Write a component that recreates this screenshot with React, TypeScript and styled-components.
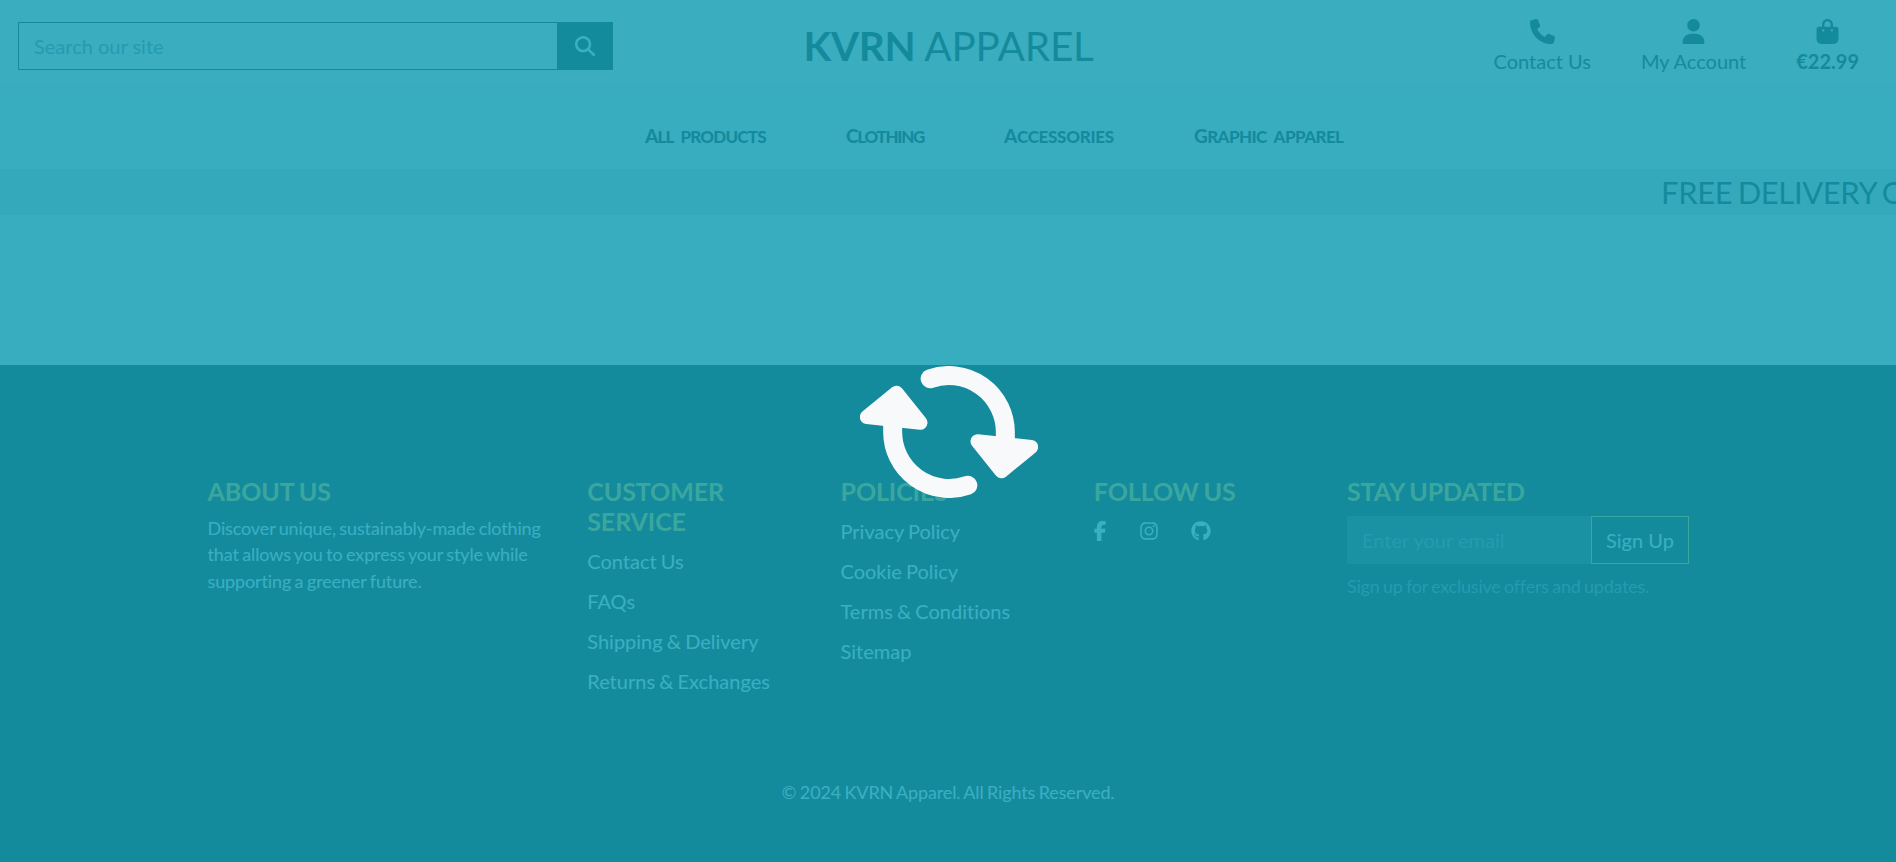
import React from "react";
import styled, { createGlobalStyle } from "styled-components";
import {
  FaBagShopping,
  FaFacebookF,
  FaGithub,
  FaInstagram,
  FaMagnifyingGlass,
  FaPhone,
  FaUser,
} from "react-icons/fa6";

const GlobalStyle = createGlobalStyle`
  *, *::before, *::after { box-sizing: border-box; }
  body {
    margin: 0;
    background: #f5ebe6;
    color: #000;
    font-family: Lato, "Liberation Sans", sans-serif;
    font-size: 20px;
    font-variant-ligatures: none;
    line-height: 1.5;
    overflow: hidden;
  }
  a { color: inherit; text-decoration: none; }
  h5, p, ul { margin: 0; padding: 0; }
`;

const Page = styled.div`
  display: flex;
  flex-direction: column;
  height: 862px;
`;

const Header = styled.header`
  display: grid;
  grid-template-columns: 632px 632px 632px;
  align-items: center;
  height: 92px;
  flex: none;
  background: linear-gradient(#fde6de 84px, transparent 84px);
`;

const SearchForm = styled.form`
  display: flex;
  height: 48px;
  margin: 0 19px 0 18px;
`;

const SearchInput = styled.input`
  flex: 1;
  min-width: 0;
  padding: 0 15px;
  border: 1px solid #000;
  border-right: 0;
  border-radius: 0;
  background: transparent;
  font: inherit;
  &::placeholder { color: #6c757d; opacity: 1; }
`;

const SearchButton = styled.button`
  display: flex;
  align-items: center;
  justify-content: center;
  width: 56px;
  padding: 0;
  border: 0;
  background: #000;
  color: #f8f9fa;
  font-size: 20px;
`;

const Logo = styled.a`
  justify-self: center;
  padding-left: 1px;
  font-size: 40.5px;
  letter-spacing: -0.25px;
  line-height: 50px;
  white-space: nowrap;
`;

const Actions = styled.div`
  display: flex;
  justify-content: flex-end;
  gap: 50px;
  padding: 2px 37px 0 0;
`;

const Action = styled.a<{ $bold?: boolean }>`
  display: flex;
  flex-direction: column;
  align-items: center;
  font-weight: ${(p) => (p.$bold ? 700 : 400)};
  line-height: 30px;
  svg { font-size: 25px; margin-bottom: 2px; }
`;

const Nav = styled.nav`
  display: flex;
  align-items: center;
  gap: 80px;
  height: 77px;
  padding: 11px 0 0 645px;
  flex: none;
`;

const NavLink = styled.a<{ $width: number; $tracking: number }>`
  width: ${(p) => p.$width}px;
  font-weight: 900;
  font-size: 17px;
  line-height: 24px;
  letter-spacing: ${(p) => p.$tracking}px;
  word-spacing: 4px;
  text-transform: uppercase;
  white-space: nowrap;
  &::first-letter { font-size: 19px; }
`;

const Banner = styled.div`
  height: 46px;
  padding-left: 1661px;
  overflow: hidden;
  background: #d9d0cc;
  font-size: 31px;
  letter-spacing: -0.4px;
  word-spacing: -2px;
  line-height: 47px;
  white-space: nowrap;
  flex: none;
`;

const Content = styled.main`
  height: 150px;
  flex: none;
`;

const Footer = styled.footer`
  display: flex;
  flex-direction: column;
  flex: 1;
  padding-top: 111px;
  background: #000;
  color: #f8f9fa;
`;

const FooterGrid = styled.div`
  display: grid;
  grid-template-columns: 342px 215.5px 215.5px 215.5px 342px;
  column-gap: 37.75px;
  height: 300px;
  padding-left: 207.5px;
`;

const Heading = styled.h5`
  margin-bottom: 9px;
  color: #ffc107;
  font-size: 25px;
  font-weight: 700;
  letter-spacing: -0.1px;
  word-spacing: -1px;
  line-height: 30px;
`;

const Small = styled.p<{ $muted?: boolean }>`
  color: ${(p) => (p.$muted ? "#6c757d" : "inherit")};
  font-size: 18px;
  letter-spacing: ${(p) => (p.$muted ? -0.22 : -0.13)}px;
  word-spacing: -1px;
  line-height: 26.4px;
`;

const LinkList = styled.ul`
  display: flex;
  flex-direction: column;
  gap: 10px;
  padding-top: 1px;
  list-style: none;
  word-spacing: -1px;
`;

const Socials = styled.div`
  display: flex;
  align-items: center;
  height: 32px;
`;

const SocialLink = styled.a<{ $width: number }>`
  display: flex;
  justify-content: center;
  width: ${(p) => p.$width}px;
  margin-right: 33.5px;
  svg { flex: none; }
`;

const SignUp = styled.form`
  display: flex;
  height: 48px;
  margin: 10px 0 9px;
`;

const EmailInput = styled.input`
  flex: 1;
  min-width: 0;
  padding: 0 15px;
  border: 0;
  border-radius: 0;
  background: #2f2f30;
  font: inherit;
  &::placeholder { color: #6c757d; opacity: 1; }
`;

const SignUpButton = styled.button`
  width: 98px;
  padding: 0;
  border: 1px solid #ffc107;
  background: transparent;
  color: #f8f9fa;
  font: inherit;
`;

const Copyright = styled(Small)`
  text-align: center;
  padding-top: 3px;
`;

const Overlay = styled.div`
  position: fixed;
  inset: 0;
  display: flex;
  align-items: center;
  justify-content: center;
  padding: 2px 0 0 2px;
  background: rgba(23, 162, 184, 0.85);
`;

const footerLinks = [
  { title: "CUSTOMER SERVICE", links: ["Contact Us", "FAQs", "Shipping & Delivery", "Returns & Exchanges"] },
  { title: "POLICIES", links: ["Privacy Policy", "Cookie Policy", "Terms & Conditions", "Sitemap"] },
];

const navLinks = [
  { label: "All Products", width: 121, tracking: -0.8 },
  { label: "Clothing", width: 78, tracking: -1.3 },
  { label: "Accessories", width: 110, tracking: -0.3 },
  { label: "Graphic Apparel", width: 149, tracking: -0.6 },
];

function SpinnerArrow() {
  return (
    <>
      <path d="M270 83A169.500 169.500 0 0 1 495.500 243V275" fill="none" stroke="#f8f9fa" strokeWidth="57" strokeLinecap="round" />
      <path d="M412 271L573 288L484 361Z" fill="#f8f9fa" stroke="#f8f9fa" strokeWidth="42" strokeLinejoin="round" />
    </>
  );
}

function Spinner() {
  return (
    <svg width="178" height="132" viewBox="59.500 45 534 396">
      <SpinnerArrow />
      <g transform="rotate(180 326.500 243)">
        <SpinnerArrow />
      </g>
    </svg>
  );
}

export default function App() {
  return (
    <>
      <GlobalStyle />
      <Page>
        <Header>
          <SearchForm>
            <SearchInput placeholder="Search our site" />
            <SearchButton type="button" aria-label="Search"><FaMagnifyingGlass /></SearchButton>
          </SearchForm>
          <Logo href="#"><strong>KVRN</strong> APPAREL</Logo>
          <Actions>
            <Action href="#"><FaPhone />Contact Us</Action>
            <Action href="#"><FaUser />My Account</Action>
            <Action href="#" $bold><FaBagShopping />€22.99</Action>
          </Actions>
        </Header>
        <Nav>
          {navLinks.map((n) => (
            <NavLink key={n.label} href="#" $width={n.width} $tracking={n.tracking}>{n.label}</NavLink>
          ))}
        </Nav>
        <Banner>FREE DELIVERY O</Banner>
        <Content />
        <Footer>
          <FooterGrid>
            <section>
              <Heading>ABOUT US</Heading>
              <Small>
                Discover unique, sustainably-made clothing that allows you to express your style while supporting a greener future.
              </Small>
            </section>
            {footerLinks.map((col) => (
              <section key={col.title}>
                <Heading>{col.title}</Heading>
                <LinkList>
                  {col.links.map((l) => (
                    <li key={l}><a href="#">{l}</a></li>
                  ))}
                </LinkList>
              </section>
            ))}
            <section>
              <Heading>FOLLOW US</Heading>
              <Socials>
                <SocialLink href="#" $width={12.5}><FaFacebookF /></SocialLink>
                <SocialLink href="#" $width={17.5}><FaInstagram /></SocialLink>
                <SocialLink href="#" $width={19.5}><FaGithub /></SocialLink>
              </Socials>
            </section>
            <section>
              <Heading>STAY UPDATED</Heading>
              <SignUp>
                <EmailInput placeholder="Enter your email" />
                <SignUpButton type="button">Sign Up</SignUpButton>
              </SignUp>
              <Small $muted>Sign up for exclusive offers and updates.</Small>
            </section>
          </FooterGrid>
          <Copyright>© 2024 KVRN Apparel. All Rights Reserved.</Copyright>
        </Footer>
      </Page>
      <Overlay><Spinner /></Overlay>
    </>
  );
}
